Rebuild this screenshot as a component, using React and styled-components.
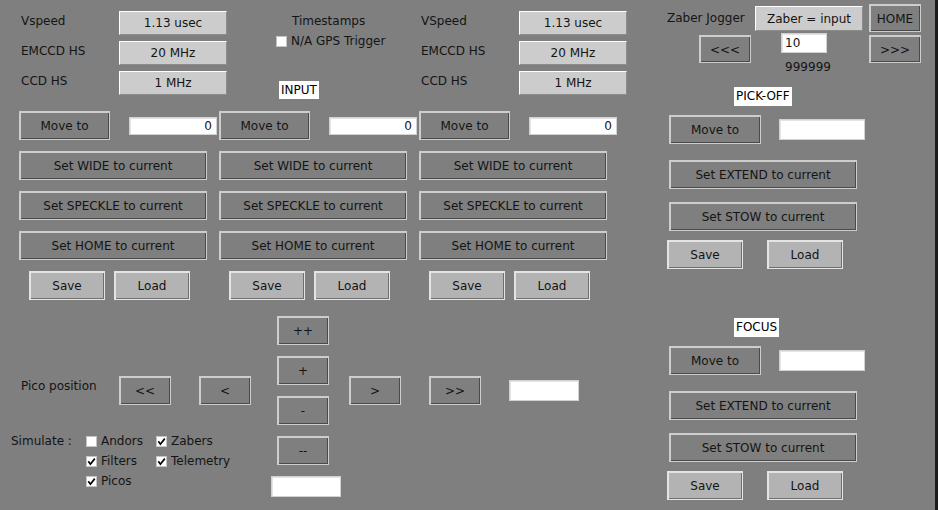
import React from 'react';
import styled, { createGlobalStyle, css } from 'styled-components';

const colors = {
  bg: '#7f7f7f',
  face: '#7f7f7f',
  faceLight: '#b3b3b3',
  value: '#cccccc',
  text: '#141414',
  edge: '#1c1c1c',
};

const GlobalStyle = createGlobalStyle`
  html, body {
    margin: 0;
    padding: 0;
    background: ${colors.bg};
  }

  body {
    font-family: "DejaVu Sans", "Liberation Sans", sans-serif;
    font-size: 12px;
    color: ${colors.text};
  }
`;

const Screen = styled.div`
  width: 938px;
  height: 510px;
  overflow: hidden;

  display: flex;

  background: ${colors.bg};
`;

const LeftPane = styled.div`
  width: 640px;

  display: flex;
  flex-direction: column;
`;

const RightPane = styled.div`
  width: 295px;

  display: flex;
  flex-direction: column;
`;

const EdgeStrip = styled.div`
  width: 3px;
  background: ${colors.edge};
`;

/* ---------- generic widgets ---------- */

const TkButton = styled.button(({ $w, $h, $light }) => {
  const light = $light ? '#e4e4e4' : '#cdcdcd';
  const dark = $light ? '#707070' : '#4a4a4a';
  return css`
    box-sizing: border-box;
    width: ${$w}px;
    height: ${$h || 29}px;
    flex: none;

    margin: 0;
    padding: 1px 0 0;

    display: flex;
    justify-content: center;
    align-items: center;

    font-family: "DejaVu Sans", sans-serif;
    font-size: 12px;
    color: ${colors.text};

    background: ${$light ? colors.faceLight : colors.face};
    border: 1px solid ${light};
    box-shadow: inset 1px 1px 0 ${light}, inset -1px -1px 0 ${dark};
    border-radius: 0;
  `;
});

const Entry = styled.input(({ $w, $h, $align }) => {
  return css`
    box-sizing: border-box;
    width: ${$w}px;
    height: ${$h}px;
    flex: none;

    margin: 0;
    padding: 0 4px 0 3px;

    font-family: "DejaVu Sans", sans-serif;
    font-size: 12px;
    color: ${colors.text};
    text-align: ${$align || 'left'};

    background: #ffffff;
    border: 1px solid #d2d2d2;
    box-shadow: inset 1px 1px 0 #e4e4e4;
    outline: none;
  `;
});

const ValueBox = styled.div(({ $h }) => {
  return css`
    box-sizing: border-box;
    width: 108px;
    height: ${$h || 24}px;

    display: flex;
    justify-content: center;
    align-items: center;

    background: ${colors.value};
    border-top: 1px solid #ffffff;
    border-left: 1px solid #ffffff;
    border-right: 1px solid #8c8c8c;
    border-bottom: 1px solid #8c8c8c;
  `;
});

const Caption = styled.div`
  align-self: flex-start;

  height: 19px;
  padding: 0 2px;

  line-height: 19px;
  color: #000000;

  background: #ffffff;
`;

const TextLabel = styled.div`
  line-height: 16px;
  white-space: nowrap;
`;

const CheckWrap = styled.label`
  height: 20px;

  display: flex;
  align-items: center;
  gap: 4px;

  white-space: nowrap;
`;

const CheckItem = ({ checked, children }) => (
  <CheckWrap>
    <svg width="11" height="11" viewBox="0 0 11 11">
      <rect x="0.5" y="0.5" width="10" height="10" fill="#ffffff" stroke="#c4c4c4" />
      {checked && (
        <path d="M2.3 5.3 L4.4 8.2 L8.8 2.6" fill="none" stroke="#000000" strokeWidth="1.7" />
      )}
    </svg>
    <span>{children}</span>
  </CheckWrap>
);

/* ---------- top: camera settings ---------- */

const TopSection = styled.div`
  height: 111px;
  display: flex;
`;

const CameraGrid = styled.div`
  padding-top: 11px;
  padding-left: ${({ $pad }) => $pad}px;

  display: grid;
  grid-template-columns: 98px 108px;
  grid-auto-rows: 24px;
  row-gap: 6px;
  align-content: start;
`;

const ParamLabel = styled(TextLabel)`
  margin-top: 2px;
`;

const TimestampsColumn = styled.div`
  width: 194px;
  box-sizing: border-box;
  padding-top: 13px;
  padding-left: 49px;

  display: flex;
  flex-direction: column;
`;

const TimestampsTitle = styled(TextLabel)`
  margin-left: 16px;
`;

const GpsCheck = styled.div`
  margin-top: 2px;
`;

const InputCaption = styled(Caption)`
  height: 18px;
  margin-top: 30px;
  margin-left: 3px;
  line-height: 18px;
`;

const CameraBlock = ({ pad, first }) => (
  <CameraGrid $pad={pad}>
    <ParamLabel>{first}</ParamLabel>
    <ValueBox>1.13 usec</ValueBox>
    <ParamLabel>EMCCD HS</ParamLabel>
    <ValueBox>20 MHz</ValueBox>
    <ParamLabel>CCD HS</ParamLabel>
    <ValueBox>1 MHz</ValueBox>
  </CameraGrid>
);

/* ---------- axis columns ---------- */

const AxisColumns = styled.div`
  padding-left: 19px;
  display: flex;
`;

const AxisColumn = styled.div`
  width: 200px;

  display: flex;
  flex-direction: column;
  gap: 11px;
`;

const MoveRow = styled.div`
  display: flex;
  align-items: center;
  gap: ${({ $gap }) => $gap}px;
`;

const SaveRow = styled.div`
  margin-left: ${({ $indent }) => $indent}px;
  display: flex;
  gap: ${({ $gap }) => $gap}px;
`;

const AxisBlock = () => (
  <AxisColumn>
    <MoveRow $gap={19}>
      <TkButton $w={91}>Move to</TkButton>
      <Entry $w={88} $h={18} $align="right" defaultValue="0" readOnly />
    </MoveRow>
    <TkButton $w={188}>Set WIDE to current</TkButton>
    <TkButton $w={188}>Set SPECKLE to current</TkButton>
    <TkButton $w={188}>Set HOME to current</TkButton>
    <SaveRow $indent={10} $gap={9}>
      <TkButton $w={76} $light>Save</TkButton>
      <TkButton $w={76} $light>Load</TkButton>
    </SaveRow>
  </AxisColumn>
);

/* ---------- pico + simulate ---------- */

const PicoSection = styled.div`
  margin-top: 16px;
  display: flex;
`;

const PicoLeft = styled.div`
  width: 271px;
  padding-top: 60px;

  display: flex;
  flex-direction: column;
`;

const PicoRow = styled.div`
  height: 29px;

  display: flex;
  align-items: center;
  gap: 28px;
`;

const PicoLabel = styled(TextLabel)`
  width: 98px;
  margin-left: 21px;
  margin-right: -28px;
  align-self: flex-start;
  margin-top: 2px;
`;

const SimulateRow = styled.div`
  margin-top: 26px;
  padding-left: 11px;

  display: flex;
`;

const SimulateLabel = styled.div`
  width: 75px;
  line-height: 20px;
`;

const CheckGrid = styled.div`
  display: grid;
  grid-template-columns: 70px auto;
  grid-auto-rows: 20px;
`;

const CenterStack = styled.div`
  width: 70px;

  display: flex;
  flex-direction: column;
  gap: 11px;

  & > button {
    margin-left: 6px;
  }
`;

const PicoRight = styled.div`
  padding-top: 60px;
  padding-left: 8px;
`;

/* ---------- right pane: zaber jogger + stages ---------- */

const JogTopRow = styled.div`
  margin-top: 4px;
  padding-left: 27px;

  display: flex;
  align-items: flex-start;
`;

const JogLabel = styled(TextLabel)`
  width: 88px;
  margin-top: 6px;
`;

const ZaberValue = styled(ValueBox)`
  margin-top: 2px;
  margin-right: 6px;
`;

const JogStepRow = styled.div`
  margin-top: 1px;
  padding-left: 59px;

  display: flex;
  align-items: flex-start;

  & > button {
    margin-top: 2px;
  }
`;

const StepColumn = styled.div`
  width: 46px;
  margin-left: 30px;
  margin-right: 42px;

  display: flex;
  flex-direction: column;
  align-items: center;
`;

const StepLimit = styled(TextLabel)`
  margin-top: 6px;
  padding-left: 8px;
`;

const StageBlock = styled.div`
  margin-top: ${({ $top }) => $top}px;
  padding-left: 29px;

  display: flex;
  flex-direction: column;
`;

const StageCaption = styled(Caption)`
  margin-left: 65px;
  margin-bottom: 9px;
`;

const StageSet = styled(TkButton)`
  margin-top: ${({ $top }) => $top}px;
`;

const StageSave = styled(SaveRow)`
  margin-top: 9px;
`;

const Stage = ({ title, top }) => (
  <StageBlock $top={top}>
    <StageCaption>{title}</StageCaption>
    <MoveRow $gap={18}>
      <TkButton $w={92}>Move to</TkButton>
      <Entry $w={86} $h={21} readOnly defaultValue="" />
    </MoveRow>
    <StageSet $w={188} $top={16}>Set EXTEND to current</StageSet>
    <StageSet $w={188} $top={13}>Set STOW to current</StageSet>
    <StageSave $indent={-2} $gap={24}>
      <TkButton $w={76} $light>Save</TkButton>
      <TkButton $w={76} $light>Load</TkButton>
    </StageSave>
  </StageBlock>
);

export default function App() {
  return (
    <>
      <GlobalStyle />
      <Screen>
        <LeftPane>
          <TopSection>
            <CameraBlock pad={21} first="Vspeed" />
            <TimestampsColumn>
              <TimestampsTitle>Timestamps</TimestampsTitle>
              <GpsCheck>
                <CheckItem>N/A GPS Trigger</CheckItem>
              </GpsCheck>
              <InputCaption>INPUT</InputCaption>
            </TimestampsColumn>
            <CameraBlock pad={0} first="VSpeed" />
          </TopSection>

          <AxisColumns>
            <AxisBlock />
            <AxisBlock />
            <AxisBlock />
          </AxisColumns>

          <PicoSection>
            <PicoLeft>
              <PicoRow>
                <PicoLabel>Pico position</PicoLabel>
                <TkButton $w={52}>&lt;&lt;</TkButton>
                <TkButton $w={52}>&lt;</TkButton>
              </PicoRow>
              <SimulateRow>
                <SimulateLabel>Simulate :</SimulateLabel>
                <CheckGrid>
                  <CheckItem>Andors</CheckItem>
                  <CheckItem checked>Zabers</CheckItem>
                  <CheckItem checked>Filters</CheckItem>
                  <CheckItem checked>Telemetry</CheckItem>
                  <CheckItem checked>Picos</CheckItem>
                </CheckGrid>
              </SimulateRow>
            </PicoLeft>

            <CenterStack>
              <TkButton $w={52}>++</TkButton>
              <TkButton $w={52}>+</TkButton>
              <TkButton $w={52}>-</TkButton>
              <TkButton $w={52}>--</TkButton>
              <Entry $w={70} $h={21} readOnly defaultValue="" />
            </CenterStack>

            <PicoRight>
              <PicoRow>
                <TkButton $w={52}>&gt;</TkButton>
                <TkButton $w={52}>&gt;&gt;</TkButton>
                <Entry $w={70} $h={21} readOnly defaultValue="" />
              </PicoRow>
            </PicoRight>
          </PicoSection>
        </LeftPane>

        <RightPane>
          <JogTopRow>
            <JogLabel>Zaber Jogger</JogLabel>
            <ZaberValue $h={25}>Zaber = input</ZaberValue>
            <TkButton $w={52} $h={28}>HOME</TkButton>
          </JogTopRow>
          <JogStepRow>
            <TkButton $w={52} $h={28}>&lt;&lt;&lt;</TkButton>
            <StepColumn>
              <Entry $w={46} $h={20} readOnly defaultValue="10" />
              <StepLimit>999999</StepLimit>
            </StepColumn>
            <TkButton $w={52} $h={28}>&gt;&gt;&gt;</TkButton>
          </JogStepRow>

          <Stage title="PICK-OFF" top={12} />
          <Stage title="FOCUS" top={49} />
        </RightPane>

        <EdgeStrip />
      </Screen>
    </>
  );
}
